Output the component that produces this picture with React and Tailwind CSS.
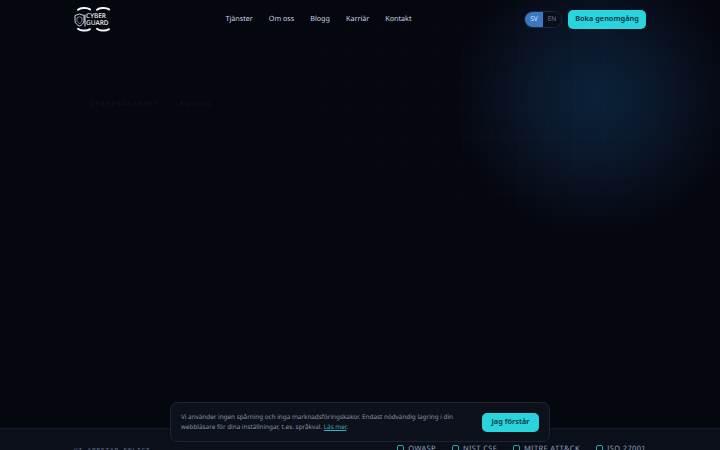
const navLinks = ["Tjänster", "Om oss", "Blogg", "Karriär", "Kontakt"];
const standards = ["OWASP", "NIST CSF", "MITRE ATT&CK", "ISO 27001"];

const Logo = () => (
  <svg width="38" height="25" viewBox="0 0 38 25" fill="none" className="absolute left-0 top-0">
    <path d="M16 2.4C14.5 1.4 13 1 11 1H9C7 1 5.5 1.5 4 2.8" stroke="#f1f5f9" strokeWidth="2" strokeLinecap="round" />
    <path d="M4 21.8C5.5 23 7 23.6 9 23.6H11C13 23.6 14.5 23.2 16 22.2" stroke="#f1f5f9" strokeWidth="2" strokeLinecap="round" />
    <path d="M35 2.4C33.5 1.4 32 1 30 1H28C26 1 24.5 1.5 23 2.8" stroke="#f1f5f9" strokeWidth="2" strokeLinecap="round" />
    <path d="M23 21.8C24.5 23 26 23.6 28 23.6H30C32 23.6 33.5 23.2 35 22.2" stroke="#f1f5f9" strokeWidth="2" strokeLinecap="round" />
    <path d="M5.5 7L10 8.5V13.5C10 16 8 18 5.5 19C3 18 1 16 1 13.5V8.5Z" stroke="#cbd5e1" strokeWidth="1" />
    <path d="M5.5 9.8L8 10.8V13.5C8 14.8 7 15.8 5.5 16.5C4 15.8 3 14.8 3 13.5V10.8Z" stroke="#94a3b8" strokeWidth="0.8" />
    <path d="M11 7.5V19.5" stroke="#e2e8f0" strokeWidth="1" />
  </svg>
);

const App = () => {
  return (
    <div className="relative flex h-[450px] flex-col overflow-hidden bg-[#05070f] font-['Noto_Sans',sans-serif] [text-rendering:geometricPrecision]">
      {/* Glow behind hero */}
      <div className="absolute left-[452px] top-[-40px] h-[276px] w-[286px] rounded-full bg-[radial-gradient(closest-side,#0a2239_0%,#0a172a_45%,#070c18_80%,#05070f_100%)]" />
      {/* Faint grid */}
      <div className="absolute inset-0 bg-[linear-gradient(rgba(255,255,255,0.01)_1px,transparent_1px),linear-gradient(90deg,rgba(255,255,255,0.01)_1px,transparent_1px)] bg-[size:28px_28px] bg-[position:15px_24px] [mask-image:radial-gradient(320px_220px_at_65%_20%,black_40%,transparent_100%)]" />

      {/* Header */}
      <header className="relative flex h-[38px] items-center justify-between px-[74px]">
        <div className="relative mt-[1px] h-[25px] w-[38px]">
          <Logo />
          <div className="absolute left-[12px] top-[5px] text-[6.5px] font-medium leading-[7px] text-slate-100">
            <div>CYBER</div>
            <div>GUARD</div>
          </div>
        </div>
        <nav className="ml-[1px] flex items-center gap-[16px] text-[7.2px] text-slate-300">
          {navLinks.map((link) => (
            <a key={link}>{link}</a>
          ))}
        </nav>
        <div className="flex items-center gap-[6px]">
          <div className="flex h-[17px] w-[38px] overflow-hidden rounded-full border border-slate-800 text-[6.5px]">
            <span className="flex w-1/2 items-center justify-center bg-[#3b78c4] text-blue-100">SV</span>
            <span className="flex w-1/2 items-center justify-center bg-[#0b0f1a] text-slate-500">EN</span>
          </div>
          <button className="h-[19px] w-[78px] rounded-[5px] bg-[#2ad4dc] text-[7.4px] font-semibold text-[#07303c]">
            Boka genomgång
          </button>
        </div>
      </header>

      {/* Hero */}
      <main className="relative flex-1 pl-[90px] pt-[62px]">
        <p className="font-['Liberation_Mono',monospace] text-[6.5px] uppercase tracking-[1.4px] text-[#12161f]">
          Cybersäkerhet · Ledning
        </p>
      </main>

      {/* Standards strip */}
      <div className="relative flex h-[22px] items-start justify-between border-t border-[#141b29] bg-[#0a0f1a] px-[74px] pt-[16px]">
        <span className="mt-[2px] font-['Liberation_Mono',monospace] text-[6px] uppercase leading-[8px] tracking-[0.9px] text-slate-500">
          Vi arbetar enligt
        </span>
        <div className="flex items-center gap-[16px]">
          {standards.map((item) => (
            <div key={item} className="flex items-center gap-[4px]">
              <span className="h-[8px] w-[7px] rounded-[2px] border border-[#2aa6a6]" />
              <span className="text-[7.5px] leading-[8px] tracking-[0.35px] text-slate-400">{item}</span>
            </div>
          ))}
        </div>
      </div>

      {/* Cookie notice */}
      <div className="absolute bottom-[8px] left-[170px] flex h-[40px] w-[380px] items-center justify-between rounded-[7px] border border-[#1c2433] bg-[#0c111c] px-[10px]">
        <p className="w-[275px] text-[6.35px] leading-[10.5px] text-[#8b95a5]">
          Vi använder ingen spårning och inga marknadsföringskakor. Endast nödvändig lagring i din webbläsare för dina inställningar, t.ex. språkval.{" "}
          <a className="text-[#2ab5bd] underline">Läs mer</a>.
        </p>
        <button className="h-[19px] w-[57px] rounded-[5px] bg-[#2ad4dc] text-[7.4px] font-semibold text-[#07303c]">
          Jag förstår
        </button>
      </div>
    </div>
  );
};

export default App;
